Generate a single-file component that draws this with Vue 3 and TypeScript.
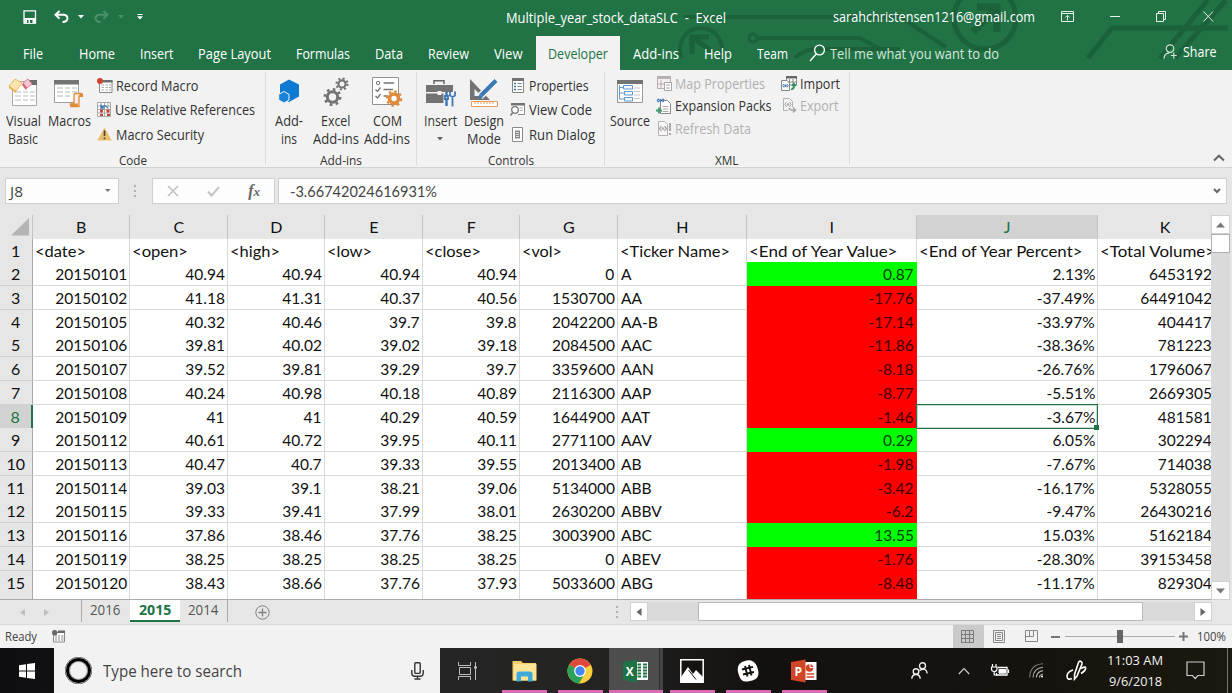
<script setup lang="ts">
import type { Directive } from 'vue'

// Condenses or widens a label horizontally so that it takes the given width.
const vFit: Directive<HTMLElement, number> = {
  mounted(el, binding) {
    const natural = el.offsetWidth ? el.getBoundingClientRect().width : 0
    if (!natural) return
    el.style.transform = `scaleX(${binding.value / natural})`
    el.style.marginRight = `${binding.value - natural}px`
  },
}

interface Tab { name: string; w: number }
const tabs: Tab[] = [
  { name: 'File', w: 20 }, { name: 'Home', w: 36 }, { name: 'Insert', w: 33.5 },
  { name: 'Page Layout', w: 73 }, { name: 'Formulas', w: 54 }, { name: 'Data', w: 28 },
  { name: 'Review', w: 41 }, { name: 'View', w: 28.5 }, { name: 'Developer', w: 60 },
  { name: 'Add-ins', w: 46 }, { name: 'Help', w: 28 }, { name: 'Team', w: 31 },
]

const columns = ['B', 'C', 'D', 'E', 'F', 'G', 'H', 'I', 'J', 'K']
const heads: [string, number][] = [
  ['<date>', 51], ['<open>', 56], ['<high>', 50], ['<low>', 45], ['<close>', 56],
  ['<vol>', 40], ['<Ticker Name>', 110], ['<End of Year Value>', 148.5],
  ['<End of Year Percent>', 163.5], ['<Total Volume>', 115],
]
const rows: string[][] = [
  ['20150101', '40.94', '40.94', '40.94', '40.94', '0', 'A', '0.87', '2.13%', '6453192'],
  ['20150102', '41.18', '41.31', '40.37', '40.56', '1530700', 'AA', '-17.76', '-37.49%', '64491042'],
  ['20150105', '40.32', '40.46', '39.7', '39.8', '2042200', 'AA-B', '-17.14', '-33.97%', '404417'],
  ['20150106', '39.81', '40.02', '39.02', '39.18', '2084500', 'AAC', '-11.86', '-38.36%', '781223'],
  ['20150107', '39.52', '39.81', '39.29', '39.7', '3359600', 'AAN', '-8.18', '-26.76%', '1796067'],
  ['20150108', '40.24', '40.98', '40.18', '40.89', '2116300', 'AAP', '-8.77', '-5.51%', '2669305'],
  ['20150109', '41', '41', '40.29', '40.59', '1644900', 'AAT', '-1.46', '-3.67%', '481581'],
  ['20150112', '40.61', '40.72', '39.95', '40.11', '2771100', 'AAV', '0.29', '6.05%', '302294'],
  ['20150113', '40.47', '40.7', '39.33', '39.55', '2013400', 'AB', '-1.98', '-7.67%', '714038'],
  ['20150114', '39.03', '39.1', '38.21', '39.06', '5134000', 'ABB', '-3.42', '-16.17%', '5328055'],
  ['20150115', '39.33', '39.41', '37.99', '38.01', '2630200', 'ABBV', '-6.2', '-9.47%', '26430216'],
  ['20150116', '37.86', '38.46', '37.76', '38.25', '3003900', 'ABC', '13.55', '15.03%', '5162184'],
  ['20150119', '38.25', '38.25', '38.25', '38.25', '0', 'ABEV', '-1.76', '-28.30%', '39153458'],
  ['20150120', '38.43', '38.66', '37.76', '37.93', '5033600', 'ABG', '-8.48', '-11.17%', '829304'],
]

function cellClass(row: number, col: number, value: string) {
  return {
    name: col === 6,
    total: col === 9,
    gain: col === 7 && !value.startsWith('-'),
    loss: col === 7 && value.startsWith('-'),
    active: col === 8 && row === 6,
  }
}
</script>

<template>
  <div class="screen">
    <header class="header">
      <svg class="circuit" width="612" height="70" viewBox="620 0 612 70" fill="none" stroke="#1b613a">
        <g stroke-width="4">
          <path d="M682 58A21 21 0 1 1 720 58" />
          <circle cx="985" cy="18" r="31" stroke-width="5" />
          <circle cx="753" cy="38" r="4" stroke-width="3" />
          <path d="M758 38H860L880 49M684 17H900L946 47" stroke-width="4" />
          <path d="M795 58Q803 49 818 49H900" />
          <path d="M1088 58L1112 28H1228M1160 58L1208 0M1175 58L1226 0" stroke-width="5" />
        </g>
        <path d="M973 32L994 10M977 7H997V32" stroke-width="7" />
        <path d="M712 52L694 38M692 54V37H709" stroke-width="5" />
      </svg>
      <div class="titlebar">
        <div class="quick">
          <svg width="14" height="14" viewBox="0 0 14 14"><path d="M1 .8H12.500V13H1Z" fill="none" stroke="#fff" stroke-width="1.3" /><path d="M1 8H12.500V13.500H1Z" fill="#fff" /><path d="M4 10H5.500V13H4ZM7 10H9.500V13H7Z" fill="#217346" /></svg>
          <svg class="undo" width="15" height="14" viewBox="0 0 15 14" fill="none" stroke="#fff" stroke-width="2"><path d="M5.500 1L1.500 4.800L5.500 8.600M2 4.800H9.500Q13.400 5 13.400 8.300Q13.400 12 8.500 12" /></svg>
          <svg class="caret" width="6" height="4"><path d="M0 0H6L3 3.600Z" fill="#fff" /></svg>
          <svg class="redo" width="15" height="14" viewBox="0 0 15 14" fill="none" stroke="#4a9068" stroke-width="2"><path d="M9.500 1L13.500 4.800L9.500 8.600M13 4.800H5.500Q1.600 5 1.600 8.300Q1.600 12 6.500 12" /></svg>
          <svg class="caret" width="6" height="4"><path d="M0 0H6L3 3.600Z" fill="#4a9068" /></svg>
          <svg class="custom" width="6" height="6"><path d="M.5 0H5.500V1H.5ZM0 2.200H6L3 5.600Z" fill="#fff" /></svg>
        </div>
        <span class="doc"><span v-fit="220" class="t">Multiple_year_stock_dataSLC&nbsp; -&nbsp; Excel</span></span>
        <span class="mail"><span v-fit="202" class="t">sarahchristensen1216@gmail.com</span></span>
        <div class="winbtns">
          <svg width="14" height="11" viewBox="0 0 14 11" fill="none" stroke="#e6f0ea"><path d="M.5 .5H12.500V10.500H.5ZM.5 2.500H12.500M6.500 9.500V4.500M4.300 6.500L6.500 4.300L8.700 6.500" /></svg>
          <svg width="10" height="11"><path d="M0 5.500H10" stroke="#e6f0ea" /></svg>
          <svg width="11" height="11" viewBox="0 0 11 11" fill="none" stroke="#e6f0ea"><path d="M.5 2.500H7.500V10.500H.5ZM2.500 2.500V.5H9.500V8.500H7.500" /></svg>
          <svg width="11" height="11" viewBox="0 0 11 11"><path d="M.5 .5L10 10.500M10 .5L.5 10.500" stroke="#e6f0ea" /></svg>
        </div>
      </div>
      <nav class="tabs">
        <span v-for="t in tabs" :key="t.name" class="tab" :class="{ on: t.name === 'Developer', first: t.name === 'File' }"><span v-fit="t.w" class="t">{{ t.name }}</span></span>
        <svg class="glass" width="17" height="18" viewBox="0 0 17 18" fill="none" stroke="#fff" stroke-width="1.400"><circle cx="10.500" cy="6" r="4.900" /><path d="M7.200 10L1 17" /></svg>
        <span v-fit="169" class="t tell">Tell me what you want to do</span>
        <span class="share">
          <svg width="15" height="15" viewBox="0 0 15 15" fill="none" stroke="#cfe3d7" stroke-width="1.200"><circle cx="7" cy="4.600" r="3.800" /><path d="M1 14.500Q1.300 9 6.500 8.800M10.800 8.500V14.500M7.800 11.500H13.800" /></svg>
          <span v-fit="33.5" class="t">Share</span>
        </span>
      </nav>
    </header>

    <section class="ribbon">
      <div class="group code">
        <div class="tools">
          <div class="big">
            <svg width="30" height="30" viewBox="0 0 30 30"><path d="M4.500 4.500H28.500V28.500H4.500Z" fill="#fff" stroke="#aaa" /><path d="M20 3H29V8H20Z" fill="#6d6d6d" /><path d="M7 15H13M15 15H20M22 15H27M7 19H13M15 19H20M22 19H27M7 23H13M15 23H20M22 23H27" stroke="#bbb" /><path d="M1 9L7 2L14 6L8 14Z" fill="#fbe6b0" stroke="#e9bd62" /><path d="M1 9L8 14V16L1 11Z" fill="#e6b04a" /><path d="M15 6L20 2L24 7L19 11Z" fill="#f6c9d2" stroke="#dc7d92" /><path d="M15 6L19 11L18 13L14 8Z" fill="#d9607a" /></svg>
            <span v-fit="35" class="t">Visual</span><span v-fit="30" class="t">Basic</span>
          </div>
          <div class="big">
            <svg width="30" height="30" viewBox="0 0 30 30"><path d="M.5 3.500H24.500V25.500H.5Z" fill="#fff" stroke="#a0a0a0" /><path d="M0 3H25V7.500H0Z" fill="#737373" /><path d="M3 11H9M11 11H16M18 11H23M3 15H9M11 15H16M18 15H23M3 19H9M11 19H16" stroke="#b5b5b5" /><path d="M20 17V27H17V29.500H25V19H28.500Q28.500 16.500 26.500 16.500H21.500Q20 16.500 20 18Z" fill="#fdf0e2" stroke="#e08a3c" stroke-width="1.300" /><path d="M15.500 26.500H24V29.500H17Q15.500 29 15.500 26.500ZM25.500 16.500H29V20H26Z" fill="#e08a3c" /></svg>
            <span v-fit="43" class="t">Macros</span>
          </div>
          <div class="list">
            <div class="row">
              <svg width="16" height="16" viewBox="0 0 16 16"><path d="M2.500 2.500H15V14.500H2.500Z" fill="#fff" stroke="#8a8a8a" /><path d="M6 2H15.500V4.500H6Z" fill="#6d6d6d" /><path d="M4.500 7H7M8.500 7H11M12 7H14M4.500 9.500H7M8.500 9.500H11M12 9.500H14M4.500 12H7M8.500 12H11M12 12H14" stroke="#aaa" /><circle cx="3" cy="3" r="3" fill="#d2402c" /></svg>
              <span v-fit="82.5" class="t">Record Macro</span>
            </div>
            <div class="row">
              <svg width="14" height="15" viewBox="0 0 14 15"><path d="M.5 .5H13.500V14.500H.5ZM.5 4H13.500M.5 7.500H13.500M.5 11H13.500M4 .5V14.500M7.500 .5V14.500M11 .5V14.500" fill="#fff" stroke="#a8a8a8" /><path d="M3 7.500H6V10.500H3ZM9.500 7.500H12.500V10.500H9.500ZM3 12H6V14H3ZM10 12H13V14H10Z" fill="#c8452c" /><path d="M4.500 5.500Q8 1.500 10.500 6M4 2.500V6H7.500" fill="none" stroke="#3c78b5" stroke-width="1.300" /></svg>
              <span v-fit="140" class="t">Use Relative References</span>
            </div>
            <div class="row">
              <svg width="15" height="14" viewBox="0 0 15 14"><path d="M7.500 .5L14.700 13.500H.3Z" fill="#ebc06d" /><path d="M7.500 3.500V9M7.500 10.500V12.200" stroke="#4a4030" stroke-width="1.600" /></svg>
              <span v-fit="88" class="t">Macro Security</span>
            </div>
          </div>
        </div>
        <div class="caption"><span v-fit="28" class="t">Code</span></div>
      </div>

      <div class="group addins">
        <div class="tools">
          <div class="big">
            <svg width="22" height="30" viewBox="0 0 22 30"><path d="M11 2.500L21 7.500V19.500L11 25L2 20V7.500Z" fill="#0f7ad2" /><path d="M6 14.500L11 17.300V23L6 26L.7 23V17.300Z" fill="#1a82d8" stroke="#f2f2f2" /></svg>
            <span v-fit="28" class="t">Add-</span><span v-fit="16" class="t">ins</span>
          </div>
          <div class="big">
            <svg width="26" height="30" viewBox="0 0 26 30" fill="none" stroke="#737373"><circle cx="9.500" cy="20" r="5.200" stroke-width="3" /><circle cx="9.500" cy="20" r="7.700" stroke-width="2.600" stroke-dasharray="2.700 3.350" /><circle cx="19" cy="7" r="3.600" stroke-width="2.200" /><circle cx="19" cy="7" r="5.600" stroke-width="2" stroke-dasharray="2 2.400" /></svg>
            <span v-fit="29.5" class="t">Excel</span><span v-fit="46" class="t">Add-ins</span>
          </div>
          <div class="big com">
            <svg width="32" height="30" viewBox="0 0 32 30" fill="none"><path d="M1.500 .5H27.500V27.500H1.500Z" fill="#fff" stroke="#929292" /><circle cx="7" cy="6" r="1.700" stroke="#777" /><path d="M4.500 12.500L6.500 14.500L9.500 10.500M4.500 19L6.500 21L9.500 17M12.500 6H23M12.500 12.500H22M12.500 19H17" stroke="#777" stroke-width="1.300" /><circle cx="23" cy="21.500" r="4.500" stroke="#e08a3c" stroke-width="3.600" fill="#fff" /><circle cx="23" cy="21.500" r="7.200" stroke="#e08a3c" stroke-width="2.200" stroke-dasharray="2.600 3.050" /></svg>
            <span v-fit="29" class="t">COM</span><span v-fit="46" class="t">Add-ins</span>
          </div>
        </div>
        <div class="caption"><span v-fit="42" class="t">Add-ins</span></div>
      </div>

      <div class="group controls">
        <div class="tools">
          <div class="big">
            <svg width="30" height="30" viewBox="0 0 30 30"><path d="M9 7V3.800H19V7" fill="none" stroke="#666" stroke-width="1.500" /><path d="M1 8H28V15H1ZM1 16.500H28V26H1Z" fill="#737373" /><path d="M12.500 14H16.500V18H12.500Z" fill="#f2f2f2" /><path d="M18.500 15H30V30H18.500Z" fill="#f2f2f2" /><path d="M21.500 15V19M21.500 22V29" stroke="#3c78b5" stroke-width="2.400" /><path d="M20 19H23V22H20ZM25 14.500V18.500L27.500 20L30 18.500V14.500M27.500 19V29.500" fill="none" stroke="#3c78b5" stroke-width="1.800" /></svg>
            <span v-fit="33" class="t">Insert</span>
            <svg class="drop" width="6" height="4"><path d="M0 0H6L3 3.500Z" fill="#666" /></svg>
          </div>
          <div class="big">
            <svg width="30" height="30" viewBox="0 0 30 30"><path d="M1 2V23H21ZM5.500 12L13 19H5.500Z" fill="#737373" fill-rule="evenodd" /><path d="M11 19.500L27 3.500" stroke="#f2f2f2" stroke-width="7" /><path d="M12 18.500L27 3.500" stroke="#3c78b5" stroke-width="4" /><path d="M9 22L10.500 17L14 20.500Z" fill="#3c78b5" /><path d="M2.500 24.500H28.500V29.500H2.500ZM6 24.500V27M9 24.500V27M12 24.500V27M15 24.500V27M18 24.500V27M21 24.500V27M24 24.500V27" fill="#fff" stroke="#e79c58" /></svg>
            <span v-fit="40" class="t">Design</span><span v-fit="34" class="t">Mode</span>
          </div>
          <div class="list">
            <div class="row">
              <svg width="15" height="15" viewBox="0 0 15 15"><path d="M2.500 .5H13.500V14.500H2.500Z" fill="#fff" stroke="#858585" /><path d="M2 0H14V3H2Z" fill="#737373" /><path d="M4 5.500H6M4 8.500H6M4 11.500H6" stroke="#3c78b5" stroke-width="1.500" /><path d="M7.500 5.500H12M7.500 8.500H12M7.500 11.500H12" stroke="#8a8a8a" /></svg>
              <span v-fit="59.5" class="t">Properties</span>
            </div>
            <div class="row">
              <svg width="15" height="15" viewBox="0 0 15 15" fill="none"><path d="M1.500 1.500H14.500V12.500H8" stroke="#8a8a8a" fill="#fff" /><path d="M1 1H15V3.500H1Z" fill="#737373" /><circle cx="5" cy="8" r="3.300" fill="#fff" stroke="#777" stroke-width="1.300" /><path d="M2.800 10.500L.5 13.500" stroke="#777" stroke-width="1.500" /><path d="M9.500 6H13M9.500 8.500H13" stroke="#aaa" /></svg>
              <span v-fit="63" class="t">View Code</span>
            </div>
            <div class="row">
              <svg width="15" height="15" viewBox="0 0 15 15"><path d="M2.500 .5H12.500V14.500H2.500Z" fill="#fff" stroke="#8a8a8a" /><path d="M5 3.500H10V11.500H5Z" fill="#8a8a8a" /><path d="M6 5.500H9M6 7.500H9M6 9.500H9" stroke="#ddd" /></svg>
              <span v-fit="66" class="t">Run Dialog</span>
            </div>
          </div>
        </div>
        <div class="caption"><span v-fit="46" class="t">Controls</span></div>
      </div>

      <div class="group xml">
        <div class="tools">
          <div class="big">
            <svg width="26" height="30" viewBox="0 0 26 30"><path d="M.5 3.500H25.500V25.500H.5Z" fill="#fff" stroke="#999" /><path d="M0 3H26V7H0Z" fill="#737373" /><path d="M17 11H23M17 14.500H23M17 18H23M17 21.500H23" stroke="#c5c5c5" /><path d="M2.500 8V22H7M2.500 10.500H6M2.500 16H7" fill="none" stroke="#6598cb" /><path d="M6.500 8.500H15.500V12H6.500ZM7.500 14.500H15.500V18H7.500ZM7.500 20.500H15.500V24H7.500Z" fill="#f2f8fd" stroke="#6598cb" /></svg>
            <span v-fit="40" class="t">Source</span>
          </div>
          <div class="list tight">
            <div class="row off">
              <svg width="16" height="15" viewBox="0 0 16 15"><path d="M1.500 .5H14.500V12.500H1.500ZM5 4V12M1.500 8H9" fill="#f5f0f2" stroke="#b5aeb2" /><path d="M1 0H15V3H1Z" fill="#b5b0b2" /><path d="M8.500 6.500H15.500V14.500H8.500ZM10 9H14M10 12H14" fill="#fff" stroke="#aaa5a8" /></svg>
              <span v-fit="90" class="t">Map Properties</span>
            </div>
            <div class="row">
              <svg width="16" height="16" viewBox="0 0 16 16"><path d="M4.500 2.500H11.500L14.500 5.500V15.500H4.500Z" fill="#fff" stroke="#8a8a8a" /><path d="M6.500 8.500H12.500M6.500 11H12.500M6.500 13.500H12.500" stroke="#aaa" /><path d="M1 2.500L3 .8M1 2.500L3 4M8 2.500L6.500 .8M8 2.500L6.500 4" stroke="#3c78b5" stroke-width="1.300" /><circle cx="4.600" cy="2.500" r="1.400" fill="#3c78b5" /><path d="M3 9.500V15.500M0 12.500H6" stroke="#3f9a6c" stroke-width="1.900" /></svg>
              <span v-fit="96.5" class="t">Expansion Packs</span>
            </div>
            <div class="row off">
              <svg width="16" height="15" viewBox="0 0 16 15" fill="none"><path d="M2.500 .5H8.500L11.500 3.500V14.500H2.500Z" fill="#faf8f9" stroke="#b5aeb2" /><path d="M5.500 5L3.500 7.500L5.500 10M8.500 5L10.500 7.500L8.500 10" stroke="#aaa" stroke-width="1.300" /><circle cx="7" cy="7.500" r="1.300" fill="#aaa" /><path d="M14 2V10M14 12V14" stroke="#a5a5a5" stroke-width="1.800" /></svg>
              <span v-fit="76" class="t">Refresh Data</span>
            </div>
          </div>
          <div class="list tight second">
            <div class="row">
              <svg width="16" height="15" viewBox="0 0 16 15" fill="none"><path d="M5.500 .5H15.500V9H5.500ZM8.500 3V9M12 3V9M5.500 6H15.500" fill="#fff" stroke="#8a8a8a" /><path d="M5 0H16V2.500H5Z" fill="#666" /><path d="M.5 4.500H6L8.500 7V14.500H.5Z" fill="#fff" stroke="#858585" /><path d="M3 8L1.800 9.700L3 11.500M6 8L7.200 9.700L6 11.500" stroke="#3c78b5" /><circle cx="4.500" cy="9.700" r="1.200" fill="#3c78b5" /><path d="M10 13.500Q13.500 13 13 8.500M11 10L13 7.700L15 10" stroke="#2f8f5b" stroke-width="1.700" /></svg>
              <span v-fit="40" class="t">Import</span>
            </div>
            <div class="row off">
              <svg width="16" height="15" viewBox="0 0 16 15" fill="none"><path d="M2.500 .5H8.500L11.500 3.500V9M2.500 .5V12.500H7" stroke="#b5aeb2" /><path d="M5.500 4L3.800 6.300L5.500 9M8.500 4L10.200 6.300L8.500 9" stroke="#aaa" /><circle cx="7" cy="6.500" r="1.300" fill="#aaa" /><path d="M8 10Q9 13 14 12M12 9.500L14.500 12L12 14.500" stroke="#a5a5a5" stroke-width="1.500" /></svg>
              <span v-fit="38.5" class="t">Export</span>
            </div>
          </div>
        </div>
        <div class="caption"><span v-fit="23.5" class="t">XML</span></div>
      </div>
      <svg class="collapse" width="12" height="8" viewBox="0 0 12 8"><path d="M1 6.500L6 1.700L11 6.500" fill="none" stroke="#666" stroke-width="2" /></svg>
    </section>

    <section class="formula">
      <div class="box ref"><span v-fit="13" class="t">J8</span><svg width="6" height="4"><path d="M0 0H5.600L2.800 3Z" fill="#777" /></svg></div>
      <svg class="dots" width="3" height="13"><path d="M0 0H2V2H0ZM0 5H2V7H0ZM0 10H2V12H0Z" fill="#b0b0b0" /></svg>
      <div class="box actions">
        <svg width="12" height="12" viewBox="0 0 12 12"><path d="M1 1L11 11M11 1L1 11" stroke="#c2c2c2" stroke-width="1.600" /></svg>
        <svg width="13" height="11" viewBox="0 0 13 11"><path d="M1 5.500L4.500 9.500L12 1" fill="none" stroke="#c8c8c8" stroke-width="2.200" /></svg>
        <span class="fx">f<small>x</small></span>
      </div>
      <div class="box value"><span v-fit="147" class="t">-3.66742024616931%</span>
        <svg width="8" height="6" viewBox="0 0 8 6"><path d="M1 1L4 4L7 1" fill="none" stroke="#666" stroke-width="2" /></svg></div>
    </section>

    <section class="sheet">
      <div class="viewport">
        <div class="grid letters">
          <span class="corner"><svg width="19" height="18"><path d="M18 0V17.500H0Z" fill="#b4b4b4" /></svg></span>
          <span v-for="c in columns" :key="c" class="letter" :class="{ picked: c === 'J' }">{{ c }}</span>
        </div>
        <div class="grid">
          <span class="num">1</span>
          <span v-for="h in heads" :key="h[0]" class="cell head"><span v-fit="h[1]" class="t">{{ h[0] }}</span></span>
        </div>
        <div v-for="(r, i) in rows" :key="i" class="grid">
          <span class="num" :class="{ picked: i === 6 }">{{ i + 2 }}</span>
          <span v-for="(v, j) in r" :key="j" class="cell" :class="cellClass(i, j, v)"><span class="v">{{ v }}</span></span>
        </div>
        <div class="grid">
          <span class="num"></span>
          <span v-for="(c, j) in columns" :key="c" class="cell" :class="{ loss: j === 7 }"></span>
        </div>
      </div>
      <div class="vscroll">
        <span class="sbtn"><svg width="9" height="6"><path d="M0 5.500L4.500 .5L9 5.500Z" fill="#777" /></svg></span>
        <span class="sbtn thumb"></span>
        <span class="sbtn end"><svg width="9" height="6"><path d="M0 .5L4.500 5.500L9 .5Z" fill="#777" /></svg></span>
      </div>
    </section>

    <section class="sheets">
      <svg class="prev" width="5" height="7"><path d="M5 0V7L0 3.500Z" fill="#c0c0c0" /></svg>
      <svg class="next" width="5" height="7"><path d="M0 0V7L5 3.500Z" fill="#c0c0c0" /></svg>
      <span class="stab left"><span v-fit="30.5" class="t">2016</span></span>
      <span class="stab on"><span v-fit="32.5" class="t">2015</span></span>
      <span class="stab right"><span v-fit="30.5" class="t">2014</span></span>
      <svg class="plus" width="15" height="15" viewBox="0 0 15 15" fill="none" stroke="#808080"><circle cx="7.500" cy="7.500" r="6.700" /><path d="M7.500 3.500V11.500M3.500 7.500H11.500" stroke-width="1.300" /></svg>
      <svg class="grip" width="2" height="12"><path d="M0 0H2V2H0ZM0 5H2V7H0ZM0 10H2V12H0Z" fill="#b0b0b0" /></svg>
      <div class="hscroll">
        <span class="hbtn"><svg width="6" height="8"><path d="M5.500 0V8L.5 4Z" fill="#666" /></svg></span>
        <span class="hthumb"></span>
        <span class="hbtn"><svg width="6" height="8"><path d="M.5 0V8L5.500 4Z" fill="#666" /></svg></span>
      </div>
    </section>

    <section class="status">
      <span v-fit="32" class="t ready">Ready</span>
      <svg class="rec" width="14" height="13" viewBox="0 0 14 13"><path d="M1.500 2.500H12.500V12H1.500Z" fill="#fff" stroke="#8a8a8a" /><path d="M6 .5H13V3H6Z" fill="#666" /><path d="M3 6H5M6 6H8M9 6H11.500M3 8H5M6 8H8M9 8H11.500M3 10H5M6 10H8M9 10H11.500" stroke="#888" /><circle cx="2.700" cy="2.700" r="2.700" fill="#666" /></svg>
      <div class="views">
        <span class="view on"><svg width="14" height="13" viewBox="0 0 14 13"><path d="M.5 .5H12.500V12.500H.5ZM4.500 0V13M8.500 0V13M0 4.500H13M0 8.500H13" fill="none" stroke="#7a7a7a" /></svg></span>
        <span class="view"><svg width="13" height="13" viewBox="0 0 13 13"><path d="M.5 .5H11.500V12.500H.5ZM2.500 2.500H9.500V10.500H2.500ZM4 4.500H8M4 6.500H8M4 8.500H8" fill="none" stroke="#888" /></svg></span>
        <span class="view"><svg width="13" height="12" viewBox="0 0 13 12"><path d="M.5 .5H12.500V11.500H.5ZM4.500 .5V6.500M8.500 .5V6.500M.5 6.500H8.500" fill="none" stroke="#888" /></svg></span>
      </div>
      <span class="minus"></span>
      <span class="zoomline"><i></i></span>
      <svg class="zin" width="9" height="9"><path d="M0 4.500H9M4.500 0V9" stroke="#777" stroke-width="2" /></svg>
      <span v-fit="29" class="t">100%</span>
    </section>

    <footer class="taskbar">
      <div class="start"><svg width="16" height="16" viewBox="0 0 16 16" fill="#fff"><path d="M0 2.200L7 1.200V7.500H0ZM8 1L16 0V7.500H8ZM0 8.500H7V14.700L0 13.800ZM8 8.500H16V16L8 14.900Z" /></svg></div>
      <div class="search">
        <span class="cortana"></span>
        <span v-fit="139" class="t">Type here to search</span>
        <svg class="mic" width="13" height="18" viewBox="0 0 13 18" fill="none" stroke="#333" stroke-width="1.400"><rect x="3.800" y=".8" width="5.400" height="10.600" rx="1" /><path d="M.8 8V11.500Q1 14.300 3.500 14.300H9.500Q12 14.300 12.200 11.500V8M6.500 14.300V17M3.500 17H9.500" /></svg>
      </div>
      <div class="app plain"><svg width="20" height="18" viewBox="0 0 20 18" fill="none" stroke="#bdbdbd"><path d="M.5 0V3.500H12.500V0M1.500 5.500H12.500V12.500H1.500ZM.5 18V14.500H12.500V18M17.500 0V18" /><path d="M16 5.500H19" stroke-width="2" /></svg></div>
      <div class="app"><svg width="25" height="22" viewBox="0 0 25 22"><path d="M.5 1H9L11 3H24V20.500H.5Z" fill="#f3cf68" /><path d="M2 4H24.500V20.500H1.500Z" fill="#fde597" /><path d="M4.500 21.500V14Q4.500 11.500 7 11.500H18Q20.500 11.500 20.500 14V21.500H16V16.500H9V21.500Z" fill="#3fa9dc" /></svg></div>
      <div class="app"><svg width="26" height="26" viewBox="0 0 26 26"><circle cx="13" cy="13" r="12.500" fill="#fbcf3b" /><path d="M13 13L2.200 6.700A12.500 12.500 0 0 1 23.800 6.700Z" fill="#dc4a3d" /><path d="M13 13L2.200 6.700A12.500 12.500 0 0 0 12 25.460L18 15Z" fill="#2da05a" /><path d="M13 7H24L23.600 6.400L13 4Z" fill="#dc4a3d" /><circle cx="13" cy="13" r="5.900" fill="#fff" /><circle cx="13" cy="13" r="4.700" fill="#4688f1" /></svg></div>
      <div class="app open"><svg width="26" height="24" viewBox="0 0 26 24"><path d="M13 3H25V21H13Z" fill="#fff" /><path d="M14.500 5.500H18M20 5.500H24M14.500 8.500H18M20 8.500H24M14.500 11.500H18M20 11.500H24M14.500 14.500H18M20 14.500H24M14.500 17.500H18M20 17.500H24" stroke="#217346" stroke-width="1.800" /><path d="M0 3L14 .5V23.500L0 21Z" fill="#1e7346" /><text x="6.800" y="16.500" text-anchor="middle" class="logo">X</text></svg></div>
      <div class="app"><svg width="24" height="24" viewBox="0 0 24 24"><path d="M.8 .8H23.200V23.200H.8Z" fill="#15130f" stroke="#fff" stroke-width="1.500" /><path d="M1 18L8 8L13 15L16 11L23 18V23H1Z" fill="#fff" /><path d="M8.500 11L16 20.500" stroke="#15130f" stroke-width="1" /></svg></div>
      <div class="app"><svg width="22" height="22" viewBox="0 0 22 22"><path d="M5 2Q12 -1 16 1.500Q19 3 20.500 8Q22.500 14 20.500 17Q18.500 20 13 21Q7 22.500 4.500 20Q2.500 18 1 12Q-.5 5 5 2Z" fill="#fff" /><path d="M8 6L10.500 16.500M12 5L14.500 15.500M5 9.500L16 6.800M6 14.500L17 12" stroke="#15130f" stroke-width="1.900" /></svg></div>
      <div class="app"><svg width="26" height="24" viewBox="0 0 26 24"><path d="M13 3H25.500V21H13Z" fill="#fff" /><circle cx="18.500" cy="9" r="3.800" fill="#cf4526" /><path d="M19 4V8.500H23.500" stroke="#fff" fill="none" /><path d="M15.500 15H23M15.500 18H23" stroke="#cf4526" stroke-width="1.500" /><path d="M0 3L14.500 .5V23.500L0 21Z" fill="#cf4526" /><text x="7.200" y="16.500" text-anchor="middle" class="logo">P</text></svg></div>
      <div class="tray">
        <span class="slot people"><svg width="17" height="18" viewBox="0 0 17 18" fill="none" stroke="#eee" stroke-width="1.400"><circle cx="11.500" cy="3.800" r="3" /><circle cx="5" cy="9.500" r="2.800" /><path d="M.8 16.800Q1 12.500 5 12.500Q9 12.500 9.200 16.800M8.500 8.300Q15.500 5 16.200 11.500" /></svg></span>
        <span class="slot up"><svg width="12" height="8" viewBox="0 0 12 8"><path d="M.8 7L6 1.500L11.200 7" fill="none" stroke="#ccc" stroke-width="1.200" /></svg></span>
        <span class="slot bat"><svg width="18" height="13" viewBox="0 0 18 13" fill="none" stroke="#fff"><path d="M7 3.500H16V11H5.500V9" stroke-width="1.300" /><path d="M8 5.500H14.500V9.200H8Z" fill="#fff" /><path d="M17.500 5.500V9M1.500 0V3M5 0V3M.5 3H6V5Q6 7.500 3.200 7.500Q.5 7.500 .5 5ZM3.200 7.500V11H6" stroke-width="1.200" /></svg></span>
        <span class="slot wifi"><svg width="15" height="15" viewBox="0 0 15 15" fill="none" stroke="#aaa" stroke-width="1.100"><path d="M.7 14.500Q1 1.500 14 .8" stroke="#777" /><path d="M4 14.500Q4.500 5 14 4.200M7.300 14.500Q8 8.500 14 7.600" /><path d="M10.200 14.500Q10.500 12 14 11" /><circle cx="13" cy="13.500" r="1" fill="#fff" stroke="none" /></svg></span>
        <span class="slot pen"><svg width="21" height="21" viewBox="0 0 21 21" fill="none" stroke="#fff" stroke-width="1.600"><path d="M8.500 14.500L12.500 2.500Q13.500 .5 15 1.500Q16.500 2.300 16 4L11 16L8.500 19Z" /><path d="M7 10Q.8 12 1 16.500Q1.500 20.500 6 18.500M15 8.500Q20.500 5.500 19.500 9Q19 11 15 13.500" /></svg></span>
        <span class="clock"><span v-fit="56" class="t">11:03 AM</span><span v-fit="53" class="t">9/6/2018</span></span>
        <span class="slot note"><svg width="19" height="19" viewBox="0 0 19 19"><path d="M1 1H18V14.500H12L9.200 17.500L6.500 14.500H1Z" fill="none" stroke="#ccc" stroke-width="1.200" /></svg></span>
        <span class="peek"></span>
      </div>
    </footer>
  </div>
</template>

<style>
body { margin: 0; overflow: hidden; }
</style>

<style scoped>
.screen { width: 1232px; height: 693px; display: flex; flex-direction: column; overflow: hidden; background: #e6e6e6; font-family: "Open Sans", "Noto Sans", sans-serif; font-size: 14px; color: #333; box-sizing: border-box; }
.screen *, .screen *::before, .screen *::after { box-sizing: border-box; }
svg { display: block; flex: none; overflow: visible; }
.t { display: inline-block; white-space: nowrap; transform-origin: left center; flex: none; }

.header { position: relative; height: 70px; flex: none; background: #217346; color: #fff; }
.circuit { position: absolute; right: 0; top: 0; overflow: hidden; }
.titlebar { position: relative; height: 36px; display: flex; align-items: flex-start; }
.quick { display: flex; align-items: center; width: 506px; padding-left: 23px; height: 33px; flex: none; }
.undo { margin-left: 17px; }
.caret { margin-left: 8.500px; }
.redo { margin-left: 10px; }
.quick .redo + .caret { margin-left: 9px; }
.custom { margin-left: 13px; }
.doc { width: 327px; line-height: 36px; flex: none; }
.mail { width: 228px; line-height: 34px; flex: none; }
.winbtns { display: flex; align-items: center; height: 32px; }
.winbtns svg:nth-child(2) { margin-left: 34.500px; }
.winbtns svg:nth-child(3) { margin-left: 36.500px; }
.winbtns svg:nth-child(4) { margin-left: 36px; }
.tabs { position: relative; height: 34px; display: flex; align-items: center; padding-left: 10.500px; }
.tab { height: 34px; line-height: 35px; padding: 0 12.500px; flex: none; }
.tab.first { margin-right: 10.500px; }
.tab.on { background: #f2f2f2; color: #217346; padding: 0 12.500px 0 11.500px; margin-left: 1px; }
.glass { margin-left: 9px; }
.tell { margin-left: 4px; color: #d3e5da; }
.share { margin-left: auto; margin-right: 15.500px; display: flex; align-items: center; gap: 5.500px; padding-bottom: 3px; }

.ribbon { height: 98px; flex: none; display: flex; background: #f2f2f2; border-bottom: 1px solid #d2d2d2; position: relative; }
.group { height: 93px; margin-top: 2px; border-right: 1px solid #dcdcdc; display: flex; flex-direction: column; flex: none; }
.code { width: 266px; }
.addins { width: 151px; }
.controls { width: 188px; }
.xml { width: 245px; }
.tools { display: flex; height: 77px; }
.caption { display: flex; justify-content: center; line-height: 18px; height: 16px; font-size: 12px; margin-top: 3px; flex: none; }
.group .caption { margin-bottom: -3px; }
.big { width: 46px; display: flex; flex-direction: column; align-items: center; padding-top: 5px; line-height: 18px; flex: none; }
.big > svg:first-child { margin-bottom: 5px; }
.addins .big:nth-child(2) { width: 48px; }
.addins .big.com { width: 54px; }
.controls .big:nth-child(2) { width: 42px; }
.xml .big { width: 50px; }
.drop { margin-top: 7px; }
.list { display: flex; flex-direction: column; padding: 2px 0 0 5px; flex: none; }
.row { display: flex; align-items: center; gap: 3.500px; height: 24.300px; line-height: 24px; }
.row svg { margin-top: -1px; }
.code .row { gap: 4px; }
.code .row:first-child { gap: 3px; }
.list.tight { padding: 1px 0 0 1px; width: 125px; }
.list.tight.second { width: auto; }
.list.tight .row { height: 22.300px; line-height: 22px; gap: 2.500px; }
.off { color: #b1b1b1; }
.collapse { margin-left: auto; margin-right: 7px; align-self: flex-end; margin-bottom: 5px; }

.formula { height: 47px; flex: none; padding: 10px 5px 0; display: flex; }
.box { height: 26px; background: #fdfdfd; border: 1px solid #cfcfcf; display: flex; align-items: center; color: #444; }
.ref { width: 114px; padding: 0 7px 0 4px; justify-content: space-between; }
.dots { margin: 7px 15px 0 15px; }
.actions { width: 123px; padding: 0 14px; justify-content: space-between; }
.fx { font: italic 700 16px/20px "Liberation Serif", serif; color: #666; }
.fx small { font-size: 13px; }
.value { margin-left: 3px; flex: 1; padding: 0 5px 0 11px; justify-content: space-between; font-family: Lato, sans-serif; font-size: 15.500px; }

.sheet { height: 385px; flex: none; display: flex; padding-right: 2px; }
.viewport { width: 1211px; height: 385px; overflow: hidden; border-bottom: 1px solid #ababab; font-family: Lato, "Open Sans", sans-serif; font-size: 16px; color: #111; }
.grid { width: 1232px; display: grid; grid-template-columns: 32.500px 97.500px 97.500px 97.500px 97.500px 97.500px 97.500px 129.500px 169.500px 181.500px 134px; height: 23.730px; }
.letters { height: 23.500px; }
.letter { text-align: center; line-height: 24px; padding-left: 1px; border-right: 1px solid #c4c4c4; border-bottom: 1px solid #ababab; background: #e6e6e6; }
.letter.picked { background: #d2d2d2; color: #217346; border-bottom: 2px solid #4f8f6c; }
.corner { border-right: 1px solid #c4c4c4; border-bottom: 1px solid #ababab; padding: 3px 0 0 11px; }
.num { text-align: center; line-height: 23px; background: #e6e6e6; border-right: 1px solid #ababab; border-bottom: 1px solid #cfcfcf; overflow: hidden; }
.num.picked { background: #d2d2d2; color: #217346; border-right: 2px solid #217346; }
.cell { background: #fff; border-right: 1px solid #d9d9d9; border-bottom: 1px solid #d9d9d9; text-align: right; padding-right: 2px; line-height: 23px; white-space: nowrap; min-width: 0; }
.v { display: inline-block; transform: scaleX(.969); transform-origin: right center; }
.head, .name { text-align: left; padding-left: 3px; }
.head { padding-left: 2px; }
.name .v { transform-origin: left center; }
.total { padding-right: 19px; }
.gain { background: #0f0; border-color: #0f0; color: #063c06; }
.loss { background: #f00; border-color: #f00; color: #3c0000; }
.active { position: relative; }
.active::before { content: ""; position: absolute; inset: -1px; border: 1px solid #217346; box-shadow: inset 0 0 0 1px rgba(33, 115, 70, .25); }
.active::after { content: ""; position: absolute; right: -2px; bottom: -2px; width: 5px; height: 5px; background: #217346; }
.vscroll { width: 19px; display: flex; flex-direction: column; background: #dadada; }
.sbtn { height: 19px; background: #fff; border: 1px solid #d0d0d0; display: flex; align-items: center; justify-content: center; }
.sbtn.end { margin-top: auto; }
.sbtn.thumb { border-color: #b0b0b0; }

.sheets { height: 24px; flex: none; display: flex; background: #e6e6e6; align-items: center; color: #555; font-size: 14px; }
.prev { margin-left: 20px; }
.next { margin-left: 19px; margin-right: 32px; }
.stab { height: 22px; line-height: 20px; align-self: flex-start; width: 49px; display: flex; justify-content: center; }
.stab.left { border-left: 1px solid #ababab; padding-right: 2px; }
.stab.right { border-right: 1px solid #ababab; width: 48px; }
.stab.on { background: #fff; color: #217346; font-weight: 700; border-bottom: 2px solid #217346; width: 50px; }
.plus { margin-left: 27px; }
.grip { margin-left: 346px; }
.hscroll { margin-left: 11.500px; width: 582px; height: 19px; background: #dadada; display: flex; margin-top: -1px; }
.hbtn { width: 18px; background: #fff; border: 1px solid #d0d0d0; display: flex; align-items: center; justify-content: center; }
.hthumb { margin: 0 auto 0 50px; width: 445px; background: #fff; border: 1px solid #b8b8b8; }

.status { height: 24px; flex: none; display: flex; align-items: center; background: #f2f2f2; border-top: 1px solid #d9d9d9; font-size: 12px; color: #444; }
.ready { margin-left: 4.500px; }
.rec { margin-left: 15px; margin-top: -1px; }
.views { display: flex; margin-left: 887px; height: 23px; }
.view { width: 31.500px; display: flex; align-items: center; justify-content: center; padding-bottom: 1px; }
.view.on { background: #cacaca; }
.minus { width: 9px; height: 2px; background: #777; margin-left: 4px; }
.zoomline { width: 110px; height: 1px; background: #aaa; margin-left: 5px; display: flex; align-items: center; justify-content: center; }
.zoomline i { width: 6px; height: 13px; background: #666; flex: none; }
.zin { margin: 0 9px 0 4px; }

.taskbar { height: 45px; flex: none; display: flex; background: linear-gradient(90deg, #0e0e12 0, #252525 440px, #232321 600px, #14100e 760px, #15120f 980px, #1b180e 1232px); }
.start { width: 54px; display: flex; align-items: center; justify-content: center; }
.search { width: 386px; background: #f2f2f2; display: flex; align-items: center; padding: 0 17px 0 11px; font-size: 16px; color: #444; }
.cortana { width: 27px; height: 27px; border-radius: 50%; border: 4px solid #000; margin-right: 11px; box-shadow: inset 0 0 0 1px #999; outline: 1px solid #aaa; outline-offset: -1px; flex: none; }
.mic { margin-left: auto; margin-right: -1px; }
.app { width: 56px; display: flex; align-items: center; justify-content: center; position: relative; flex: none; padding-right: 2px; }
.app.plain { width: 57px; }
.app:not(.plain)::after { content: ""; position: absolute; left: 5px; bottom: 0; width: 45px; height: 3px; background: #da6cb3; }
.app.open { background: linear-gradient(90deg, #4d4d4d 0 50px, #333 50px 51px, #444 51px); width: 54px; padding-right: 0; margin-right: 2px; }
.app.open::after { left: 0 !important; width: 54px !important; }
.logo { font: 700 12px "Open Sans", sans-serif; fill: #fff; }
.tray { margin-left: auto; display: flex; color: #f0f0f0; }
.slot { display: flex; align-items: center; justify-content: center; }
.people { width: 42px; }
.up { width: 47px; }
.bat { width: 26px; }
.wifi { width: 47px; }
.pen { width: 33px; }
.clock { width: 84px; display: flex; flex-direction: column; align-items: center; line-height: 21px; font-size: 13.500px; padding-top: 2px; }
.note { width: 36px; }
.peek { width: 5px; margin-left: 14px; border-left: 1px solid #77756c; }
</style>
